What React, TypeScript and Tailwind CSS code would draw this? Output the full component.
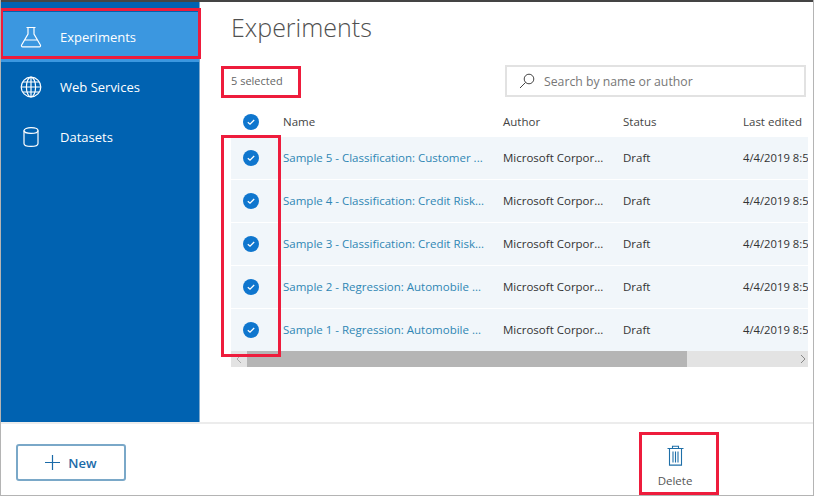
const rows = [
  'Sample 5 - Classification: Customer ...',
  'Sample 4 - Classification: Credit Risk...',
  'Sample 3 - Classification: Credit Risk...',
  'Sample 2 - Regression: Automobile ...',
  'Sample 1 - Regression: Automobile ...',
];

function Check() {
  return (
    <svg width="16" height="16" viewBox="0 0 16 16" className="shrink-0">
      <circle cx="8" cy="8" r="8" fill="#0f76ce" />
      <path d="M4.8 8.2 7 10.2 11.2 6" fill="none" stroke="#fff" strokeWidth="1.3" />
    </svg>
  );
}

function Flask() {
  return (
    <svg width="22" height="22" viewBox="0 0 22 22" fill="none" stroke="#fff" strokeWidth="1.2">
      <path d="M6.5 1.5h9M8 1.5v6.5L1.6 19a1.2 1.2 0 0 0 1 1.8h16.8a1.2 1.2 0 0 0 1-1.8L14 8V1.5M4.5 14h13" />
    </svg>
  );
}

function Globe() {
  return (
    <svg width="22" height="22" viewBox="0 0 22 22" fill="none" stroke="#fff" strokeWidth="1.2">
      <circle cx="11" cy="11" r="9.8" />
      <ellipse cx="11" cy="11" rx="4.6" ry="9.8" />
      <path d="M11 1.2v19.6M1.2 11h19.6M2.6 6h16.8M2.6 16h16.8" />
    </svg>
  );
}

function Cylinder() {
  return (
    <svg width="16" height="20" viewBox="0 0 16 20" fill="none" stroke="#fff" strokeWidth="1.2">
      <path d="M1 3.5v13c0 1.6 3 2.9 7 2.9s7-1.3 7-2.9v-13" />
      <ellipse cx="8" cy="3.5" rx="7" ry="2.9" />
    </svg>
  );
}

function NavItem({ icon, label, active }: { icon: React.ReactNode; label: string; active?: boolean }) {
  return (
    <div className={`flex items-center h-[50px] ${active ? 'bg-[#3b97e0]' : ''}`}>
      <div className="w-[59px] flex justify-center">{icon}</div>
      <span className="text-[13px] text-white pt-[2px]">{label}</span>
    </div>
  );
}

export default function App() {
  return (
    <div className="relative w-[814px] h-[496px] overflow-hidden bg-white flex flex-col border-x border-b border-[#b4b4b4] font-['Open_Sans','Noto_Sans',sans-serif]">
      <div className="h-[2px] bg-[#444444] shrink-0" />
      <div className="flex h-[420px] shrink-0">
        {/* Sidebar */}
        <aside className="w-[199px] bg-[#0062b1] pt-[10px] shrink-0 border-r border-[#7fa9cc]">
          <NavItem icon={<Flask />} label="Experiments" active />
          <NavItem icon={<Globe />} label="Web Services" />
          <NavItem icon={<Cylinder />} label="Datasets" />
        </aside>

        {/* Main content */}
        <main className="flex-1 min-w-0 pl-[31px] pr-[5px]">
          <h1 className="text-[25px] leading-[34px] mt-[8px] text-[#505050] font-light">Experiments</h1>
          <div className="flex items-center justify-between mt-[20px] h-[33px] pr-[2px]">
            <span className="text-[11px] text-[#666666] pt-[2px]">5 selected</span>
            <div className="w-[301px] h-[32px] border-2 border-[#e2e2e2] flex items-center pl-[12px] gap-[9px]">
              <svg width="16" height="16" viewBox="0 0 16 16" fill="none" stroke="#444" strokeWidth="1">
                <circle cx="10" cy="6" r="4.8" />
                <path d="M6.6 9.4 1 15" />
              </svg>
              <span className="text-[12.25px] text-[#777777] pt-[3px]">Search by name or author</span>
            </div>
          </div>

          <div className="mt-[10px] overflow-hidden">
            <div className="flex items-center h-[29px] text-[11.5px] text-[#444444]">
              <div className="w-[40px] flex justify-center"><Check /></div>
              <div className="w-[232px] pl-[12px]">Name</div>
              <div className="w-[120px]">Author</div>
              <div className="w-[120px]">Status</div>
              <div className="whitespace-nowrap">Last edited</div>
            </div>
            {rows.map((name) => (
              <div key={name} className="flex items-center h-[43px] bg-[#f1f6fa] border-t border-white text-[11.5px] whitespace-nowrap">
                <div className="w-[40px] flex justify-center shrink-0"><Check /></div>
                <div className="w-[232px] pl-[12px] shrink-0 text-[#2f86b4]">{name}</div>
                <div className="w-[120px] shrink-0 text-[#333333]">Microsoft Corpor...</div>
                <div className="w-[120px] shrink-0 text-[#333333]">Draft</div>
                <div className="shrink-0 text-[#333333] text-[11.25px]">4/4/2019 8:5</div>
              </div>
            ))}
            <div className="flex items-stretch h-[16px] bg-[#e3e3e3]">
              <div className="w-[16px] flex items-center justify-center">
                <svg width="6" height="10" viewBox="0 0 6 10" fill="none" stroke="#aaa"><path d="M5 1 1 5l4 4" /></svg>
              </div>
              <div className="w-[440px] bg-[#b5b5b5]" />
              <div className="flex-1 flex items-center justify-end pr-[2px]">
                <svg width="6" height="10" viewBox="0 0 6 10" fill="none" stroke="#888"><path d="m1 1 4 4-4 4" /></svg>
              </div>
            </div>
          </div>
        </main>
      </div>

      {/* Bottom bar */}
      <footer className="flex-1 flex items-center border-t-2 border-[#ececec] pl-[15px] pt-[6px]">
        <button className="w-[110px] h-[37px] border-2 border-[#7aa8c8] rounded-[3px] flex items-center justify-center gap-[8px] text-[13px] font-semibold text-[#1a6aa8]">
          <svg width="15" height="15" viewBox="0 0 15 15" stroke="#1a6aa8" strokeWidth="1.2"><path d="M7.5 0v15M0 7.5h15" /></svg>
          <span className="pt-[2px]">New</span>
        </button>
        <div className="ml-[510px] w-[78px] flex flex-col items-center pt-[10px]">
          <svg width="17" height="21" viewBox="0 0 17 21" fill="none" stroke="#1f6fa8" strokeWidth="1.1">
            <path d="M.5 3.5h16M5.5 3.5V1.2h6v2.3M2.5 3.5v16.6h12V3.5M6 6.5v11M8.5 6.5v11M11 6.5v11" />
          </svg>
          <span className="text-[11.5px] text-[#555555] mt-[6px]">Delete</span>
        </div>
      </footer>

      {/* Red annotation boxes */}
      <div className="absolute left-[-1px] top-[8px] w-[201px] h-[51px] border-[3px] border-[#ee1c3c]" />
      <div className="absolute left-[220px] top-[66px] w-[80px] h-[32px] border-[3px] border-[#ee1c3c]" />
      <div className="absolute left-[220px] top-[135px] w-[60px] h-[222px] border-[3px] border-[#ee1c3c]" />
      <div className="absolute left-[638px] top-[432px] w-[80px] h-[63px] border-[3px] border-[#ee1c3c]" />
    </div>
  );
}
